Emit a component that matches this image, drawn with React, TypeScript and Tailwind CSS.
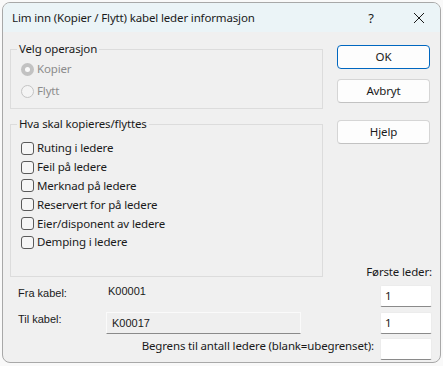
import React from "react";

const segoe = { fontFamily: '"Noto Sans", "Open Sans", sans-serif', letterSpacing: "-0.15px" };
const mss = { fontFamily: '"Liberation Sans", Arial, sans-serif', letterSpacing: "0px" };

function Radio({ checked, label }: { checked?: boolean; label: string }) {
  return (
    <div className="flex items-center h-[22px]">
      <div className="w-[14px] flex items-center justify-center ml-[3px]">
        {checked ? (
          <div className="w-[13px] h-[13px] rounded-full bg-[#c2c2c2] flex items-center justify-center">
            <div className="w-[5px] h-[5px] rounded-full bg-[#fafafa]" />
          </div>
        ) : (
          <div className="w-[13px] h-[13px] rounded-full border border-[#c4c4c4] bg-[#f4f4f4]" />
        )}
      </div>
      <span className="ml-[3px] text-[#8c8c8c]">{label}</span>
    </div>
  );
}

function Check({ label }: { label: string }) {
  return (
    <div className="flex items-center h-[18.8px]">
      <div className="ml-[4px] w-[13px] h-[13px] rounded-[3px] border border-[#5a5a5a] bg-[#f6f6f6]" />
      <span className="ml-[3px] text-[#1a1a1a]">{label}</span>
    </div>
  );
}

function Btn({ label, primary }: { label: string; primary?: boolean }) {
  return (
    <div
      className={
        "w-[93px] h-[24px] rounded-[4px] bg-[#fdfdfd] flex items-center justify-center text-[#1a1a1a] " +
        (primary
          ? "border border-[#0067c0]"
          : "border border-[#d5d5d5] border-b-[#c2c2c2]")
      }
    >
      {label}
    </div>
  );
}

function Box({ value }: { value?: string }) {
  return (
    <div className="w-[52px] h-[22px] bg-white border border-[#ececec] border-b-[#8a8a8a] rounded-[2px] flex items-center pl-[4px] text-[#1a1a1a]">
      {value}
    </div>
  );
}

export default function App() {
  return (
    <div className="w-[443px] h-[366px] bg-[#f9f9f9] pt-[2px] pl-[2px]" style={segoe}>
      <div className="w-[439px] h-[361px] border border-[#a8a8a8] rounded-[8px] overflow-hidden bg-[#f0f0f0] flex flex-col text-[11.5px] leading-[16px]">
        {/* title bar */}
        <div className="h-[29px] bg-[#ebf4f7] flex items-center pl-[9px] text-[#1a1a1a] shrink-0">
          <span className="flex-1">Lim inn (Kopier / Flytt) kabel leder informasjon</span>
          <span className="w-[12px] text-center text-[13px] mr-[36px]">?</span>
          <svg width="12" height="12" viewBox="0 0 12 12" className="mr-[15px]">
            <path d="M1 1 L11 11 M11 1 L1 11" stroke="#1a1a1a" strokeWidth="1" />
          </svg>
        </div>
        {/* top section */}
        <div className="flex pl-[7px]">
          <div className="w-[313px] flex flex-col">
            <fieldset className="mt-[9px] h-[68px] border border-[#dcdcdc] px-[6px] pt-[1px]">
              <legend className="px-[2px] text-[#1a1a1a]">Velg operasjon</legend>
              <Radio checked label="Kopier" />
              <Radio label="Flytt" />
            </fieldset>
            <fieldset className="mt-[7px] h-[161px] border border-[#dcdcdc] px-[6px] pt-[7px]">
              <legend className="px-[2px] text-[#1a1a1a]">Hva skal kopieres/flyttes</legend>
              <Check label="Ruting i ledere" />
              <Check label="Feil på ledere" />
              <Check label="Merknad på ledere" />
              <Check label="Reservert for på ledere" />
              <Check label="Eier/disponent av ledere" />
              <Check label="Demping i ledere" />
            </fieldset>
          </div>
          <div className="ml-[14px] w-[95px] flex flex-col pt-[13px]">
            <Btn primary label="OK" />
            <div className="mt-[10px]">
              <Btn label="Avbryt" />
            </div>
            <div className="mt-[17px]">
              <Btn label="Hjelp" />
            </div>
            <div className="mt-auto -mb-[2px] text-right h-[14px] leading-[14px] text-[#1a1a1a]">Første leder:</div>
          </div>
        </div>
        {/* bottom rows */}
        <div className="flex items-center mt-[8px] h-[22px] pl-[15px]">
          <span className="w-[90px] text-[11px] text-[#1a1a1a] -mt-[7px]" style={mss}>
            Fra kabel:
          </span>
          <span className="text-[11px] text-[#1a1a1a] -mt-[10px]" style={mss}>
            K00001
          </span>
          <div className="ml-auto mr-[8px]">
            <Box value="1" />
          </div>
        </div>
        <div className="flex items-center mt-[5px] h-[22px] pl-[15px]">
          <span className="w-[88px] text-[11px] text-[#1a1a1a] -mt-[8px]" style={mss}>
            Til kabel:
          </span>
          <div
            className="w-[195px] h-[22px] bg-[#efefef] border border-[#fafafa] border-b-[#8a8a8a] flex items-center pl-[5px] text-[11px] text-[#1a1a1a]"
            style={mss}
          >
            K00017
          </div>
          <div className="ml-auto mr-[8px]">
            <Box value="1" />
          </div>
        </div>
        <div className="flex items-center mt-[4px] h-[22px]">
          <span className="ml-auto mr-[6px] text-[#1a1a1a] -mt-[6px]">Begrens til antall ledere (blank=ubegrenset):</span>
          <div className="mr-[8px]">
            <Box />
          </div>
        </div>
      </div>
    </div>
  );
}
